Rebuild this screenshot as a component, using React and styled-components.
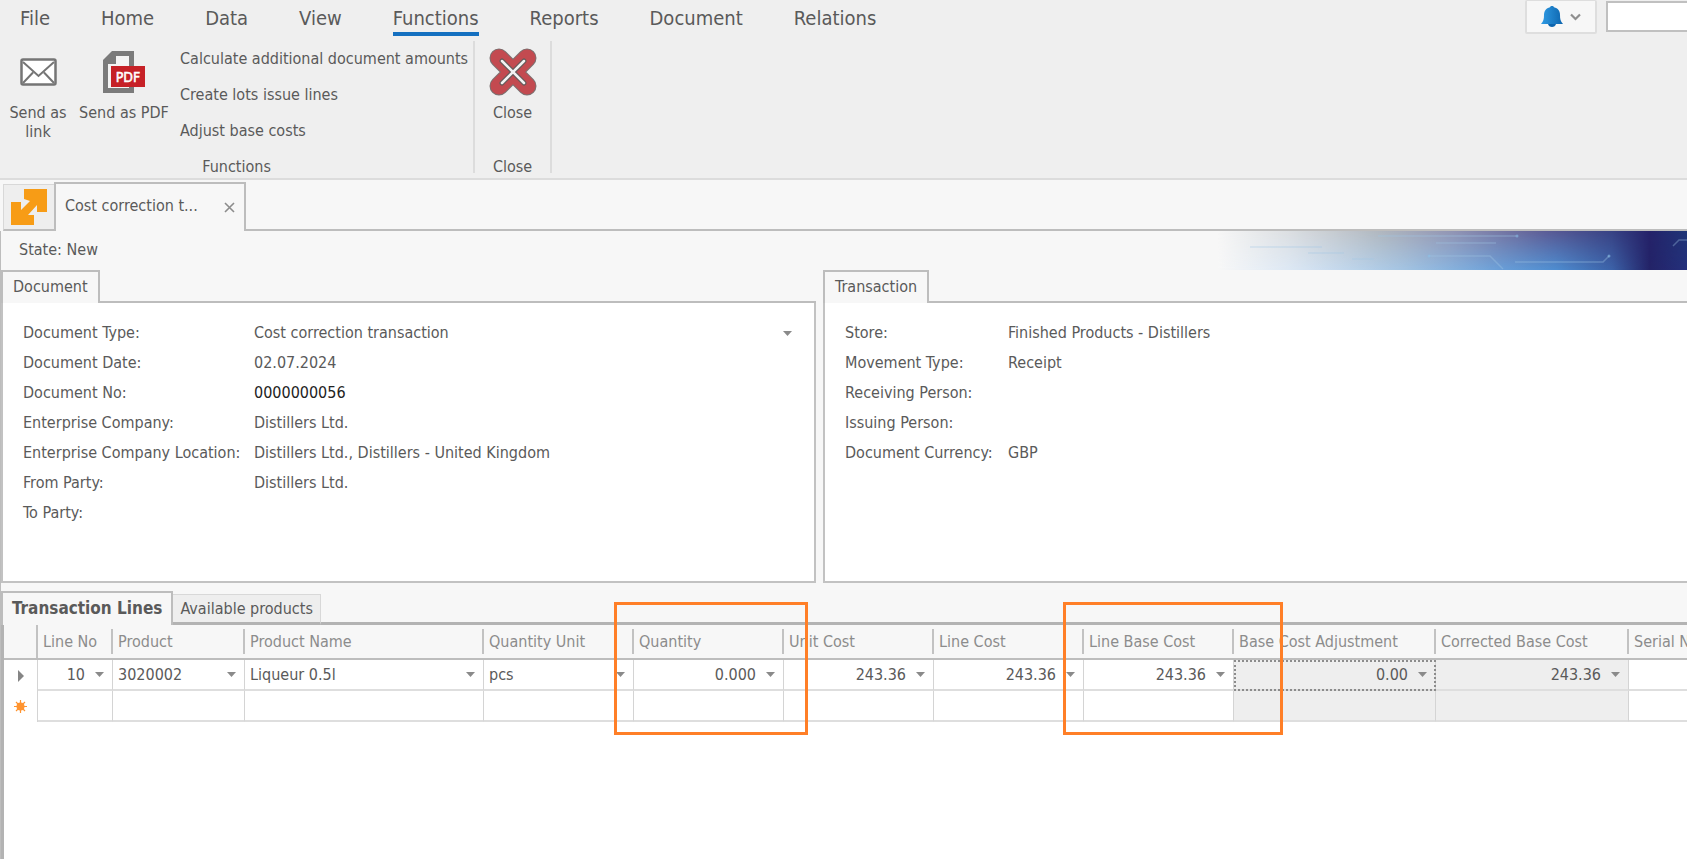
import React, { useState } from 'react'
import styled, { createGlobalStyle, css } from 'styled-components'

const menu = ['File', 'Home', 'Data', 'View', 'Functions', 'Reports', 'Document', 'Relations']

const actions = ['Calculate additional document amounts', 'Create lots issue lines', 'Adjust base costs']

const documentFields = [
	{ id: 'type', label: 'Document Type:', value: 'Cost correction transaction', select: true },
	{ id: 'date', label: 'Document Date:', value: '02.07.2024' },
	{ id: 'no', label: 'Document No:', value: '0000000056', strong: true },
	{ id: 'company', label: 'Enterprise Company:', value: 'Distillers Ltd.' },
	{ id: 'location', label: 'Enterprise Company Location:', value: 'Distillers Ltd., Distillers - United Kingdom' },
	{ id: 'from', label: 'From Party:', value: 'Distillers Ltd.' },
	{ id: 'to', label: 'To Party:', value: '' }
]

const transactionFields = [
	{ id: 'store', label: 'Store:', value: 'Finished Products - Distillers' },
	{ id: 'movement', label: 'Movement Type:', value: 'Receipt' },
	{ id: 'receiving', label: 'Receiving Person:', value: '' },
	{ id: 'issuing', label: 'Issuing Person:', value: '' },
	{ id: 'currency', label: 'Document Currency:', value: 'GBP' }
]

const columns = [
	{ title: 'Line No', width: 75, value: '10', numeric: true },
	{ title: 'Product', width: 132, value: '3020002' },
	{ title: 'Product Name', width: 239, value: 'Liqueur 0.5l' },
	{ title: 'Quantity Unit', width: 150, value: 'pcs' },
	{ title: 'Quantity', width: 150, value: '0.000', numeric: true },
	{ title: 'Unit Cost', width: 150, value: '243.36', numeric: true },
	{ title: 'Line Cost', width: 150, value: '243.36', numeric: true },
	{ title: 'Line Base Cost', width: 150, value: '243.36', numeric: true },
	{ title: 'Base Cost Adjustment', width: 202, value: '0.00', numeric: true, readOnly: true, focused: true },
	{ title: 'Corrected Base Cost', width: 193, value: '243.36', numeric: true, readOnly: true },
	{ title: 'Serial No', value: null }
]

const Caret = () => (
	<svg width="9" height="5" viewBox="0 0 9 5" aria-hidden="true">
		<path d="M0 0h9L4.500 5z" fill="#8a8a8a" />
	</svg>
)

const MailIcon = () => (
	<svg width="37" height="28" viewBox="0 0 37 28" aria-hidden="true">
		<rect x="1.500" y="1.500" width="34" height="25" rx="1.500" fill="#fff" stroke="#757575" strokeWidth="2.500" />
		<path d="M3 4l15.500 14L34 4M3 25l10-10.500M34 25L24 14.500" fill="none" stroke="#757575" strokeWidth="2" />
	</svg>
)

const PdfIcon = () => (
	<svg width="42" height="42" viewBox="0 0 42 42" aria-hidden="true">
		<path d="M9 0h22v42H0V9z" fill="#7b7b7b" />
		<path d="M13 5h13v32H5V13h8z" fill="#f4f4f4" />
		<rect x="8" y="15" width="34" height="21" fill="#c62127" />
		<text x="25" y="31" fill="#fff" fontSize="14" fontWeight="500" textAnchor="middle" stroke="#fff" strokeWidth="0.500" fontFamily="'DejaVu Sans Condensed', 'Noto Sans', sans-serif">PDF</text>
	</svg>
)

const CloseIcon = () => (
	<svg width="48" height="48" viewBox="0 0 48 48" aria-hidden="true" strokeLinecap="round">
		<path d="M10 10l28 28M38 10L10 38" stroke="#7c7070" strokeWidth="19" />
		<path d="M10 10l28 28M38 10L10 38" stroke="#c34a50" strokeWidth="17" />
		<path d="M13 13l22 22M35 13L13 35" stroke="#665a5a" strokeWidth="5" />
		<path d="M13 13l22 22M35 13L13 35" stroke="#f2f2f2" strokeWidth="2.500" />
	</svg>
)

const BellIcon = () => (
	<svg width="22" height="21" viewBox="0 0 22 21" aria-hidden="true">
		<defs>
			<linearGradient id="bell">
				<stop offset="0" stopColor="#2f9be4" />
				<stop offset="1" stopColor="#0d65ae" />
			</linearGradient>
		</defs>
		<path d="M11 0c1 0 1.700.6 2 1.200C17 2.200 19 5 19 9c0 4 .5 6 3 9H0c2.500-3 3-5 3-9 0-4 2-6.800 6-7.800C9.300.6 10 0 11 0z" fill="url(#bell)" />
		<path d="M7 18h8c-.5 2-2 3-4 3s-3.500-1-4-3z" fill="#0d65ae" />
	</svg>
)

const ChevronIcon = () => (
	<svg width="11" height="8" viewBox="0 0 11 8" aria-hidden="true">
		<path d="M1 1.500l4.500 4.500L10 1.500" fill="none" stroke="#8f8f8f" strokeWidth="2.200" />
	</svg>
)

const LogoIcon = () => (
	<svg width="36" height="36" viewBox="0 0 36 36" aria-hidden="true">
		<path d="M13 0h23v23H26v-7L17 26h6v10H0V13h10v8l9-9-6-2z" fill="#f79c16" />
	</svg>
)

const CrossIcon = () => (
	<svg width="11" height="11" viewBox="0 0 11 11" aria-hidden="true">
		<path d="M1 1l9 9M10 1l-9 9" stroke="#8c8c8c" strokeWidth="1.600" />
	</svg>
)

const NewRowIcon = () => (
	<svg width="13" height="13" viewBox="0 0 13 13" aria-hidden="true">
		<circle cx="6.500" cy="6.500" r="4" fill="#ff9430" />
		<path d="M6.500 0v13M0 6.500h13M2 2l9 9M11 2l-9 9" stroke="#ff9430" strokeWidth="1.200" />
	</svg>
)

const CurrentRowIcon = () => (
	<svg width="6" height="12" viewBox="0 0 6 12" aria-hidden="true">
		<path d="M0 0l6 6-6 6z" fill="#858585" />
	</svg>
)

// circuit board strip, fades out to the left
const CircuitBanner = () => (
	<Banner viewBox="0 0 469 39" preserveAspectRatio="none" aria-hidden="true">
		<defs>
			<linearGradient id="top">
				<stop offset="0" stopColor="#f7f7f7" />
				<stop offset="0.150" stopColor="#dcdfe2" />
				<stop offset="0.350" stopColor="#b0b7bf" />
				<stop offset="0.500" stopColor="#9295b4" />
				<stop offset="0.700" stopColor="#5c5c96" />
				<stop offset="0.840" stopColor="#384284" />
				<stop offset="0.920" stopColor="#25226a" />
				<stop offset="1" stopColor="#1f3577" />
			</linearGradient>
			<linearGradient id="bottom">
				<stop offset="0" stopColor="#f7f7f7" />
				<stop offset="0.150" stopColor="#dde8f4" />
				<stop offset="0.400" stopColor="#a2c3e2" />
				<stop offset="0.600" stopColor="#6a9fd8" />
				<stop offset="0.720" stopColor="#4e8dd0" />
				<stop offset="0.840" stopColor="#3c62a8" />
				<stop offset="0.920" stopColor="#232367" />
				<stop offset="1" stopColor="#24307c" />
			</linearGradient>
			<linearGradient id="fade" x2="0" y2="1">
				<stop offset="0" stopColor="#000" />
				<stop offset="1" stopColor="#fff" />
			</linearGradient>
			<mask id="lower">
				<rect width="469" height="39" fill="url(#fade)" />
			</mask>
		</defs>
		<rect width="469" height="39" fill="url(#top)" />
		<rect width="469" height="39" fill="url(#bottom)" mask="url(#lower)" />
		<g fill="none" stroke="#a4c8e6" strokeOpacity="0.350" strokeWidth="1.500">
			<path d="M160 5h138M218 12h60M32 16h72M90 22h36M134 28h22M211 25h61l13 13M297 31h88l6-6M455 15l6-6h8" />
		</g>
		<g fill="#8cc0e6" fillOpacity="0.600">
			<circle cx="299" cy="5" r="1.500" />
			<circle cx="211" cy="25" r="1.500" />
			<circle cx="391" cy="25" r="1.500" />
		</g>
	</Banner>
)

const Fields = ({ name, fields, labelWidth }) => (
	<FieldList>
		{fields.map(field => (
			<Field key={field.id} $labelWidth={labelWidth}>
				<label htmlFor={`${name}-${field.id}`}>{field.label}</label>
				{field.select
					? <SelectWrap>
						<FieldSelect id={`${name}-${field.id}`}>
							<option>{field.value}</option>
						</FieldSelect>
						<Caret />
					</SelectWrap>
					: <FieldInput id={`${name}-${field.id}`} defaultValue={field.value} $strong={field.strong} />
				}
			</Field>
		))}
	</FieldList>
)

const App = () => {

	const [active, setActive] = useState('Functions')

	return (
		<Page>
			<GlobalStyle />
			<Ribbon>
				<TopBar>
					<Menu>
						{menu.map(item => (
							<MenuItem key={item} $active={item === active} onClick={() => setActive(item)}>{item}</MenuItem>
						))}
					</Menu>
					<Notifications aria-label="Notifications">
						<BellIcon />
						<ChevronIcon />
					</Notifications>
					<Search type="text" aria-label="Search" />
				</TopBar>
				<Groups>
					<Group>
						<GroupBody>
							<LargeButton $width={76}>
								<IconBox><MailIcon /></IconBox>
								Send as link
							</LargeButton>
							<LargeButton $width={96}>
								<IconBox><PdfIcon /></IconBox>
								Send as PDF
							</LargeButton>
							<ActionList>
								{actions.map(action => <Action key={action}>{action}</Action>)}
							</ActionList>
						</GroupBody>
						<GroupTitle>Functions</GroupTitle>
					</Group>
					<Group>
						<GroupBody>
							<LargeButton $width={75}>
								<IconBox><CloseIcon /></IconBox>
								Close
							</LargeButton>
						</GroupBody>
						<GroupTitle>Close</GroupTitle>
					</Group>
				</Groups>
			</Ribbon>

			<DocTabs>
				<HomeTab aria-label="Start page"><LogoIcon /></HomeTab>
				<DocTab>
					<span>Cost correction t...</span>
					<CloseTab aria-label="Close tab"><CrossIcon /></CloseTab>
				</DocTab>
				<TabFiller />
			</DocTabs>

			<Workspace>
				<StateRow>
					<State>State: New</State>
					<CircuitBanner />
				</StateRow>

				<Panels>
					<Panel>
						<PanelHead>
							<PanelTab>Document</PanelTab>
							<TabFiller />
						</PanelHead>
						<PanelBody>
							<Fields name="document" fields={documentFields} labelWidth={231} />
						</PanelBody>
					</Panel>
					<Panel>
						<PanelHead>
							<PanelTab>Transaction</PanelTab>
							<TabFiller />
						</PanelHead>
						<PanelBody $open>
							<Fields name="transaction" fields={transactionFields} labelWidth={163} />
						</PanelBody>
					</Panel>
				</Panels>

				<Lines>
					<LineTabs>
						<LineTab $active>Transaction Lines</LineTab>
						<LineTab>Available products</LineTab>
						<TabFiller />
					</LineTabs>
					<GridArea>
						<Table>
							<colgroup>
								<Col $width={34} />
								{columns.map(col => <Col key={col.title} $width={col.width} />)}
							</colgroup>
							<thead>
								<tr>
									<HeadCell $full><HeadText /></HeadCell>
									{columns.map(col => (
										<HeadCell key={col.title}><HeadText $last={!col.width}>{col.title}</HeadText></HeadCell>
									))}
								</tr>
							</thead>
							<tbody>
								<tr>
									<MarkCell><CurrentRowIcon /></MarkCell>
									{columns.map(col => (
										<Cell key={col.title} $readOnly={col.readOnly} $focused={col.focused} $last={!col.width}>
											{col.value !== null &&
												<CellEditor>
													<CellInput aria-label={col.title} defaultValue={col.value} readOnly={col.readOnly} $numeric={col.numeric} />
													<DropButton aria-label={`Open ${col.title}`}><Caret /></DropButton>
												</CellEditor>
											}
										</Cell>
									))}
								</tr>
								<tr>
									<MarkCell><NewRowIcon /></MarkCell>
									{columns.map(col => <Cell key={col.title} $readOnly={col.readOnly} $last={!col.width} />)}
								</tr>
							</tbody>
						</Table>
					</GridArea>
					<Highlight $left={613} $width={194} />
					<Highlight $left={1062} $width={220} />
				</Lines>
			</Workspace>
		</Page>
	)
}

export default App

const GlobalStyle = createGlobalStyle`
	* {
		box-sizing: border-box;
	}

	body {
		margin: 0;
		background: #fff;
	}

	body, button, input, select {
		font-family: "DejaVu Sans Condensed", "Noto Sans", sans-serif;
		font-size: 16px;
		line-height: 20px;
		color: #5a5a5a;
	}

	button {
		padding: 0;
		border: none;
		background: none;
		cursor: pointer;
	}

	input, select {
		min-width: 0;
		padding: 0;
		border: none;
		border-radius: 0;
		outline: none;
		background: transparent;
	}

	svg {
		display: block;
		flex: none;
	}
`

const Page = styled.div`
	min-height: 100vh;
	display: flex;
	flex-direction: column;
	overflow: hidden;
	background: #f7f7f7;
`

const Ribbon = styled.header`
	background: #efefef;
	border-bottom: 2px solid #dcdcdc;
`

const TopBar = styled.div`
	display: flex;
	align-items: flex-start;
	height: 40px;
`

const Menu = styled.nav`
	display: flex;
	flex: 1;
	gap: 51px;
	padding: 4px 0 0 20px;
`

const MenuItem = styled.button`
	height: 32px;
	font-size: 20px;
	line-height: 28px;
	border-bottom: 4px solid ${props => props.$active ? '#1570c0' : 'transparent'};
`

const Notifications = styled.button`
	display: flex;
	align-items: center;
	justify-content: center;
	gap: 7px;
	width: 72px;
	height: 34px;
	margin-right: 9px;
	background: #f7f7f7;
	border: 2px solid #dedede;
	border-top-width: 1px;
	border-radius: 2px;
`

const Search = styled.input`
	width: 81px;
	height: 31px;
	margin-top: 1px;
	background: #fff;
	border: 2px solid #c0c0c0;
	border-right: none;
`

const Groups = styled.div`
	display: flex;
	padding: 1px 0 5px;
`

const Group = styled.section`
	display: flex;
	flex-direction: column;
	height: 132px;
	border-right: 2px solid #dcdcdc;
`

const GroupBody = styled.div`
	display: flex;
	flex: 1;
`

const LargeButton = styled.button`
	display: flex;
	flex-direction: column;
	align-items: center;
	width: ${props => props.$width}px;
	padding: 0 2px;
	line-height: 19px;
`

const IconBox = styled.span`
	display: flex;
	align-items: center;
	justify-content: center;
	height: 62px;
`

const ActionList = styled.div`
	display: flex;
	flex-direction: column;
	align-items: flex-start;
	padding: 0 5px 0 8px;
`

const Action = styled.button`
	height: 36px;
	white-space: nowrap;
`

const GroupTitle = styled.div`
	text-align: center;
	line-height: 12px;
`

const DocTabs = styled.div`
	display: flex;
	align-items: flex-end;
	height: 51px;
	padding-left: 3px;
`

const TabFiller = styled.div`
	flex: 1;
	align-self: flex-end;
	border-bottom: 2px solid #bdbdbd;
`

const HomeTab = styled.button`
	display: flex;
	align-items: center;
	justify-content: center;
	width: 51px;
	height: 47px;
	background: #eee;
	border: 1px solid #d8d8d8;
	border-right: none;
	border-bottom: 2px solid #bdbdbd;
`

const DocTab = styled.div`
	display: flex;
	align-items: center;
	justify-content: space-between;
	width: 192px;
	height: 49px;
	padding: 0 9px 4px;
	border: 2px solid #bdbdbd;
	border-bottom: none;
`

const CloseTab = styled.button`
	padding-top: 3px;
`

const Workspace = styled.main`
	display: flex;
	flex: 1;
	flex-direction: column;
	border-left: 1px solid #bdbdbd;
`

const StateRow = styled.div`
	display: flex;
	justify-content: space-between;
	height: 39px;
`

const State = styled.div`
	padding: 9px 0 0 18px;
`

const Banner = styled.svg`
	width: 469px;
	height: 39px;
`

const Panels = styled.div`
	display: grid;
	grid-template-columns: 815fr 864fr;
	gap: 7px;
	min-height: 313px;
`

const Panel = styled.section`
	display: flex;
	flex-direction: column;
`

const PanelHead = styled.div`
	display: flex;
`

const PanelTab = styled.button`
	height: 33px;
	padding: 0 10px 2px;
	border: 2px solid #bdbdbd;
	border-bottom: none;
`

const PanelBody = styled.div`
	flex: 1;
	padding: 15px 22px 15px 20px;
	background: #fff;
	border: 2px solid #c2c2c2;
	border-top: none;
	border-right-width: ${props => props.$open ? '0' : '2px'};
`

const FieldList = styled.div`
	display: flex;
	flex-direction: column;
`

const Field = styled.div`
	display: grid;
	grid-template-columns: ${props => props.$labelWidth}px 1fr;
	align-items: center;
	height: 30px;
	white-space: nowrap;
`

const FieldInput = styled.input`
	width: 100%;
	color: ${props => props.$strong ? '#222' : '#5a5a5a'};
`

const SelectWrap = styled.div`
	display: flex;
	align-items: center;
`

const FieldSelect = styled.select`
	flex: 1;
	appearance: none;
`

const Lines = styled.section`
	position: relative;
	display: flex;
	flex: 1;
	flex-direction: column;
	margin-top: 8px;
`

const LineTabs = styled.div`
	display: flex;
	align-items: flex-end;

	${TabFiller} {
		border-bottom: 3px solid #b3b3b3;
	}
`

const LineTab = styled.button`
	height: ${props => props.$active ? '34px' : '31px'};
	white-space: nowrap;

	${props => props.$active
		? css`
			padding: 0 9px 2px;
			font-size: 17px;
			font-weight: 700;
			border: 2px solid #bdbdbd;
			border-bottom: none;
		`
		: css`
			padding: 0 7px;
			background: #eee;
			border: 1px solid #d8d8d8;
			border-left: none;
			border-bottom: 3px solid #b3b3b3;
		`
	}
`

const GridArea = styled.div`
	flex: 1;
	background: #fff;
	border-left: 3px solid #b3b3b3;
`

const Table = styled.table`
	width: 100%;
	table-layout: fixed;
	border-spacing: 0;
`

const Col = styled.col`
	width: ${props => props.$width ? props.$width + 'px' : 'auto'};
`

const HeadCell = styled.th`
	height: 35px;
	padding: ${props => props.$full ? '0' : '4px 0'};
	background: #f7f7f7;
	border-bottom: 2px solid #bdbdbd;
	color: #8c8c8c;
	font-weight: 400;
	text-align: left;
`

const HeadText = styled.div`
	height: 100%;
	min-height: 25px;
	padding-left: 5px;
	line-height: 25px;
	border-right: ${props => props.$last ? 'none' : '2px solid #c2c2c2'};
	overflow: hidden;
	white-space: nowrap;
`

const Cell = styled.td`
	height: 31px;
	padding: 0;
	background: ${props => props.$readOnly ? '#eee' : '#fff'};
	border-right: ${props => props.$last ? 'none' : '1px solid #d4d4d4'};
	border-bottom: 2px solid #dedede;

	${props => props.$focused && css`
		outline: 2px dotted #8c8c8c;
		outline-offset: -2px;
	`}
`

const MarkCell = styled(Cell)`
	border-bottom: none;

	svg {
		margin: 0 auto;
	}
`

const CellEditor = styled.div`
	display: flex;
	align-items: center;
`

const CellInput = styled.input`
	flex: 1;
	padding-left: 5px;
	text-align: ${props => props.$numeric ? 'right' : 'left'};
`

const DropButton = styled.button`
	padding: 8px 8px 8px 10px;
`

const Highlight = styled.div`
	position: absolute;
	top: 11px;
	left: ${props => props.$left}px;
	width: ${props => props.$width}px;
	height: 133px;
	border: 3px solid #ff7f27;
	pointer-events: none;
`
